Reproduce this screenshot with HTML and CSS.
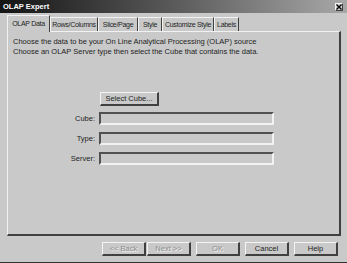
FILE: index.html
```html
<!DOCTYPE html>
<html>
<head>
<meta charset="utf-8">
<link rel="stylesheet" href="styles.css">
</head>
<body>
<div class="window">
  <div class="titlebar">
    <span class="title">OLAP Expert</span>
    <span class="close"><svg width="6" height="6" viewBox="0 0 6 6"><path d="M0.5 0.5 L5.5 5.5 M5.5 0.5 L0.5 5.5" stroke="#000" stroke-width="1.4"/></svg></span>
  </div>
  <div class="tabs">
    <div class="tab active t1">OLAP Data</div>
    <div class="tab t2">Rows/Columns</div>
    <div class="tab t3">Slice/Page</div>
    <div class="tab t4">Style</div>
    <div class="tab t5">Customize Style</div>
    <div class="tab t6">Labels</div>
  </div>
  <div class="panel">
    <p class="intro">Choose the data to be your On Line Analytical Processing (OLAP) source<br>Choose an OLAP Server type then select the Cube that contains the data.</p>
    <div class="form">
      <div class="row"><span class="label"></span><div class="btn select">Select Cube...</div></div>
      <div class="row"><span class="label">Cube:</span><div class="field"></div></div>
      <div class="row"><span class="label">Type:</span><div class="field"></div></div>
      <div class="row"><span class="label">Server:</span><div class="field"></div></div>
    </div>
  </div>
  <div class="footer">
    <div class="btn disabled back">&lt;&lt; Back</div>
    <div class="btn disabled next">Next &gt;&gt;</div>
    <div class="btn disabled ok">OK</div>
    <div class="btn cancel">Cancel</div>
    <div class="btn help">Help</div>
  </div>
</div>
</body>
</html>
```
FILE: styles.css
```css
html, body {
  margin: 0;
  padding: 0;
  background: #c9c9c9;
}
.window {
  width: 347px;
  height: 263px;
  box-sizing: border-box;
  background: #c9c9c9;
  border-bottom: 1px solid #303030;
  font-family: "Liberation Sans", Arial, sans-serif;
  font-size: 7.5px;
  color: #1e1e1e;
  position: relative;
}
.titlebar {
  height: 13px;
  background: linear-gradient(to right, #141414 0%, #5a5a5a 50%, #a8a8a8 100%);
  display: flex;
  align-items: center;
  justify-content: space-between;
  padding: 0 4px 0 3px;
}
.title {
  color: #fff;
  font-weight: bold;
  font-size: 7.5px;
}
.close {
  width: 8px;
  height: 8px;
  background: #d4d4d4;
  border-top: 1px solid #f4f4f4;
  border-left: 1px solid #f4f4f4;
  border-right: 1px solid #404040;
  border-bottom: 1px solid #404040;
  box-sizing: border-box;
  display: flex;
  align-items: center;
  justify-content: center;
}
.tabs {
  display: flex;
  align-items: flex-end;
  padding-left: 7px;
  height: 18px;
  position: relative;
  z-index: 1;
  font-size: 7px;
  letter-spacing: -0.3px;
}
.tab {
  height: 14px;
  box-sizing: border-box;
  line-height: 13px;
  text-align: center;
  border-top: 1px solid #f2f2f2;
  border-left: 1px solid #f2f2f2;
  border-right: 1px solid #404040;
  white-space: nowrap;
}
.tab.active {
  height: 17px;
  line-height: 15px;
  background: #c9c9c9;
  margin-bottom: -1px;
}
.t1 { width: 43px; }
.t2 { width: 48px; }
.t3 { width: 40px; }
.t4 { width: 24px; }
.t5 { width: 52px; }
.t6 { width: 25px; }
.panel {
  margin: 0 6px 0 7px;
  height: 205px;
  box-sizing: border-box;
  border-top: 1px solid #f2f2f2;
  border-left: 1px solid #f2f2f2;
  border-right: 2px solid #404040;
  border-bottom: 2px solid #404040;
  padding: 5px 0 0 5px;
}
.intro {
  margin: 0;
  line-height: 10px;
}
.form {
  margin-top: 35px;
  display: flex;
  flex-direction: column;
  gap: 7px;
}
.row {
  display: flex;
  align-items: center;
  height: 13px;
}
.label {
  width: 82px;
  text-align: right;
  margin-right: 4px;
}
.field {
  width: 175px;
  height: 13px;
  box-sizing: border-box;
  border-top: 2px solid #505050;
  border-left: 2px solid #505050;
  border-right: 2px solid #f2f2f2;
  border-bottom: 2px solid #f2f2f2;
}
.btn {
  height: 14px;
  box-sizing: border-box;
  border-top: 1px solid #f4f4f4;
  border-left: 1px solid #f4f4f4;
  border-right: 2px solid #404040;
  border-bottom: 2px solid #404040;
  display: flex;
  align-items: center;
  justify-content: center;
  white-space: nowrap;
}
.select {
  width: 59px;
  margin-left: 1px;
}
.footer {
  display: flex;
  padding-left: 102px;
  margin-top: 6px;
}
.footer .btn {
  width: 44px;
}
.disabled {
  color: #8c8c8c;
  text-shadow: 1px 1px 0 #f4f4f4;
}
.next { margin-left: 1px; }
.ok { margin-left: 5px; }
.cancel { margin-left: 5px; }
.help { margin-left: 5px; }
```
